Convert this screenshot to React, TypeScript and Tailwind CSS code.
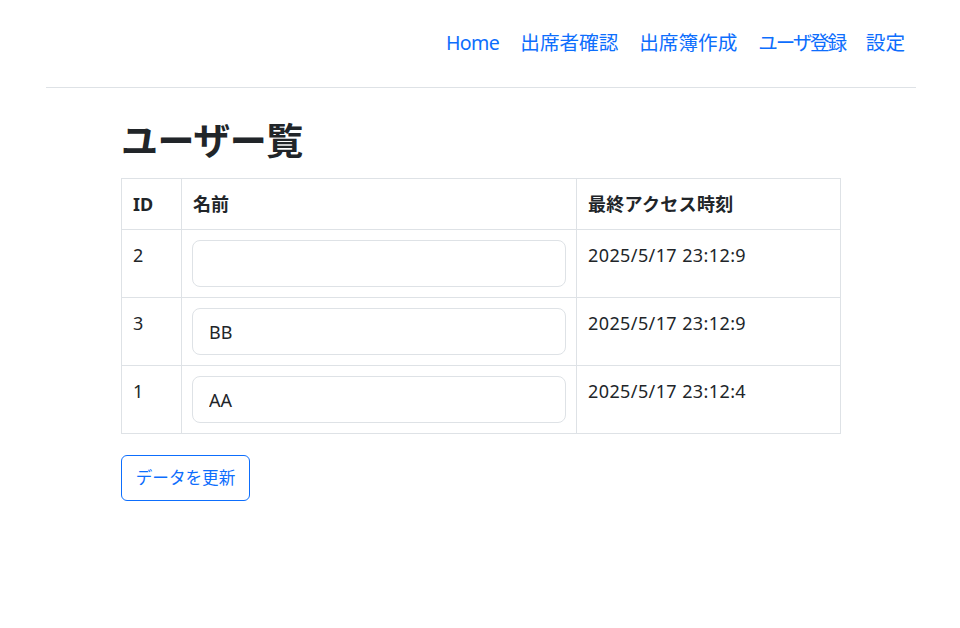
import React, { useState } from "react";

interface UserRow {
  id: number;
  name: string;
  lastAccess: string;
}

const NAV_LINKS = [
  { label: "Home", cls: "tracking-[-0.6px]" },
  { label: "出席者確認", cls: "" },
  { label: "出席簿作成", cls: "" },
  { label: "ユーザ登録", cls: "tracking-[-2.2px]" },
  { label: "設定", cls: "pr-[11px]" },
];

const INITIAL_USERS: UserRow[] = [
  { id: 2, name: "", lastAccess: "2025/5/17 23:12:9" },
  { id: 3, name: "BB", lastAccess: "2025/5/17 23:12:9" },
  { id: 1, name: "AA", lastAccess: "2025/5/17 23:12:4" },
];

export default function App() {
  const [users, setUsers] = useState<UserRow[]>(INITIAL_USERS);

  const updateName = (id: number, name: string) => {
    setUsers((prev) => prev.map((u) => (u.id === id ? { ...u, name } : u)));
  };

  return (
    <div className="min-h-screen bg-white text-[#212529] font-['Noto_Sans','Noto_Sans_CJK_JP',sans-serif]">
      {/* Top navigation */}
      <header className="ml-[46px] w-[870px] border-b border-[#dee2e6]">
        <nav className="flex h-[87px] items-center justify-end pb-[2px]">
          {NAV_LINKS.map((link) => (
            <a
              key={link.label}
              href="#"
              className={`px-[10.5px] text-[19.6px] leading-none text-[#0d6efd] ${link.cls}`}
            >
              {link.label}
            </a>
          ))}
        </nav>
      </header>

      {/* Main content */}
      <main className="ml-[121px] w-[720px] pt-[31px]">
        <h1 className="mb-[15px] text-[37px] font-bold leading-[1.2] tracking-[-0.5px]">ユーザー覧</h1>

        <table className="w-full border-collapse text-[18px] leading-[1.5]">
          <thead>
            <tr>
              <th className="h-[51px] w-[60px] border border-[#dee2e6] px-[11px] text-left font-bold">ID</th>
              <th className="h-[51px] w-[395px] border border-[#dee2e6] px-[11px] text-left font-bold">名前</th>
              <th className="h-[51px] border border-[#dee2e6] px-[11px] text-left font-bold tracking-[0.3px]">
                最終アクセス時刻
              </th>
            </tr>
          </thead>
          <tbody>
            {users.map((u) => (
              <tr key={u.id}>
                <td className="h-[68px] border border-[#dee2e6] px-[11px] pt-[12px] align-top">{u.id}</td>
                <td className="h-[68px] border border-[#dee2e6] px-[10px] py-[10px] align-top">
                  <input
                    type="text"
                    value={u.name}
                    onChange={(e) => updateName(u.id, e.target.value)}
                    className="block h-[47px] w-full rounded-[8px] border border-[#dee2e6] px-[16px] text-[18px] text-[#212529] outline-none"
                  />
                </td>
                <td className="h-[68px] border border-[#dee2e6] px-[11px] pt-[12px] align-top tracking-[0.4px]">
                  {u.lastAccess}
                </td>
              </tr>
            ))}
          </tbody>
        </table>

        <button
          type="button"
          className="mt-[21px] h-[46px] w-[129px] rounded-[6px] border border-[#0d6efd] text-[16.6px] text-[#0d6efd]"
        >
          データを更新
        </button>
      </main>
    </div>
  );
}
